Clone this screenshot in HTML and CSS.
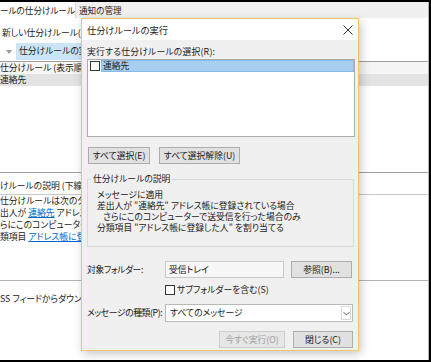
FILE: index.html
```html
<!DOCTYPE html>
<html lang="ja">
<head>
    <meta charset="UTF-8">
    <title>仕分けルールの実行</title>
    <link rel="stylesheet" href="styles.css">
</head>

<body>
    <div class="screen">
        <div class="rules-window">
            <div class="tabs">
                <div class="tab tab-active">ールの仕分けルール</div>
                <div class="tab">通知の管理</div>
            </div>
            <div class="toolbar"><span class="cut">新しい仕分けルール(<u>N</u>)...</span></div>
            <div class="toolbar-run">
                <span class="arrow"></span>
                <span class="run-button">仕分けルールの実行</span>
            </div>
            <div class="rule-list">
                <div class="list-head"><span class="cut">仕分けルール (表示順に適用)</span></div>
                <div class="list-row"><span class="cut">連絡先</span></div>
            </div>
            <div class="desc">
                <div class="desc-label"><span class="cut">けルールの説明 (下線をクリックして編集)</span></div>
                <div class="desc-box">
                    <span class="cut">仕分けルールは次のタイミングで適用</span>
                    <span class="cut">出人が <a class="link">連絡先</a> アドレス帳に登録</span>
                    <span class="cut">らにこのコンピューターで送受信</span>
                    <span class="cut">類項目 <a class="link">アドレス帳に登録した人</a></span>
                </div>
            </div>
            <div class="rss"><span class="cut">SS フィードからダウンロードしたアイテム</span></div>
        </div>

        <div class="dialog">
            <div class="title-bar">
                <span class="title">仕分けルールの実行</span>
                <svg class="close" width="10" height="10" viewBox="0 0 10 10">
                    <path d="M0.5 0.5L9.5 9.5M9.5 0.5L0.5 9.5" stroke="#333" stroke-width="1" fill="none"/>
                </svg>
            </div>
            <div class="dialog-body">
                <div class="field-label">実行する仕分けルールの選択(R):</div>
                <div class="rule-box">
                    <div class="rule-item">
                        <span class="check"></span>
                        <span class="rule-name">連絡先</span>
                    </div>
                </div>
                <div class="select-buttons">
                    <button class="btn btn-all">すべて選択(E)</button>
                    <button class="btn btn-none">すべて選択解除(U)</button>
                </div>
                <fieldset class="desc-group">
                    <legend>仕分けルールの説明</legend>
                    <div class="desc-line">メッセージに適用</div>
                    <div class="desc-line">差出人が "連絡先" アドレス帳に登録されている場合</div>
                    <div class="desc-line indent">さらにこのコンピューターで送受信を行った場合のみ</div>
                    <div class="desc-line">分類項目 "アドレス帳に登録した人" を割り当てる</div>
                </fieldset>
                <div class="form-row folder-row">
                    <span class="row-label">対象フォルダー:</span>
                    <span class="text-box">受信トレイ</span>
                    <button class="btn btn-browse">参照(B)...</button>
                </div>
                <div class="form-row sub-row">
                    <span class="check"></span>
                    <span>サブフォルダーを含む(S)</span>
                </div>
                <div class="form-row type-row">
                    <span class="row-label">メッセージの種類(P):</span>
                    <span class="combo">
                        <span class="combo-text">すべてのメッセージ</span>
                        <span class="combo-arrow">
                            <svg width="7" height="5" viewBox="0 0 7 5">
                                <path d="M0.5 1L3.5 4L6.5 1" stroke="#666" stroke-width="1" fill="none"/>
                            </svg>
                        </span>
                    </span>
                </div>
                <div class="dialog-buttons">
                    <button class="btn btn-run" disabled>今すぐ実行(O)</button>
                    <button class="btn btn-close">閉じる(C)</button>
                </div>
            </div>
        </div>
    </div>
</body>
</html>
```

FILE: styles.css
```css
* {
    box-sizing: border-box;
}

body {
    margin: 0;
    font-family: "Noto Sans CJK JP", "Noto Sans", sans-serif;
    font-size: 8.8px;
    font-feature-settings: "palt";
    color: #1a1a1a;
    background: #000;
}

.screen {
    position: relative;
    width: 431px;
    height: 362px;
    overflow: hidden;
    border-top: 2px solid #000;
    border-right: 2px solid #000;
    border-bottom: 2px solid #000;
    background: #fff;
}

/* background rules window */
.rules-window {
    height: 100%;
    border-right: 1px solid #b4b4b4;
    white-space: nowrap;
    overflow: hidden;
    line-height: 12px;
}

.cut {
    display: block;
    width: 81px;
    overflow: hidden;
    white-space: nowrap;
}

.tabs {
    display: flex;
    height: 16px;
    background: #f0f0f0;
    font-size: 8.6px;
}

.tab {
    padding: 2px 5px 0 3px;
}

.tab-active {
    width: 76px;
    padding-left: 0;
    background: #fff;
    border-right: 1px solid #dadada;
}

.toolbar {
    margin-top: 9px;
    padding-left: 2px;
}

.toolbar .cut {
    width: 79px;
}

.toolbar-run {
    display: flex;
    align-items: center;
    width: 81px;
    height: 17px;
    margin-top: 4px;
    overflow: hidden;
}

.arrow {
    flex: none;
    width: 0;
    height: 0;
    margin: 1px 4px 0 6px;
    border-left: 3px solid transparent;
    border-right: 3px solid transparent;
    border-top: 4px solid #9a9a9a;
}

.run-button {
    flex: none;
    height: 17px;
    padding: 2px 4px 0 3px;
    background: #cce4f7;
}

.rule-list {
    margin-top: 1px;
    border-top: 1px solid #a0a0a0;
}

.list-head {
    background: #f5f5f5;
}

.list-row {
    background: #e3e3e3;
}

.desc {
    margin-top: 86px;
    border-top: 1px solid #a0a0a0;
}

.desc-label {
    height: 22px;
    padding-top: 7px;
    border-bottom: 1px solid #c8c8c8;
}

.desc-box {
    height: 86px;
    border-bottom: 1px solid #b4b4b4;
}

.link {
    color: #0066cc;
    text-decoration: underline;
}

.rss {
    margin-top: 12px;
}

/* dialog */
.dialog {
    position: absolute;
    left: 81px;
    top: 16px;
    width: 278px;
    height: 333px;
    border: 1px solid #f0c566;
    background: #f0f0f0;
    box-shadow: 2px 3px 9px rgba(0, 0, 0, 0.22);
    line-height: 12px;
}

.title-bar {
    display: flex;
    align-items: center;
    justify-content: space-between;
    height: 21px;
    padding: 0 5px;
    background: #fff;
}

.title {
    font-size: 9.2px;
}

.dialog-body {
    display: flex;
    flex-direction: column;
    padding: 6px 3px 0 5px;
}

.field-label {
    letter-spacing: 0.2px;
}

.rule-box {
    height: 78px;
    margin-top: 1px;
    background: #fff;
    border: 1px solid #acacac;
}

.rule-item {
    display: flex;
    align-items: center;
}

.check {
    display: inline-block;
    flex: none;
    width: 10px;
    height: 10px;
    background: #fff;
    border: 1px solid #333;
}

.rule-item .check {
    margin-left: 2px;
}

.rule-name {
    flex: 1;
    height: 12px;
    margin-left: 1px;
    padding-left: 1px;
    background: #a6cff2;
    border: 1px solid #86bbe8;
    line-height: 10px;
}

.btn {
    height: 17px;
    padding: 0;
    font-family: inherit;
    font-size: inherit;
    font-feature-settings: inherit;
    color: #1a1a1a;
    background: #e1e1e1;
    border: 1px solid #adadad;
    border-radius: 0;
}

.select-buttons {
    display: flex;
    gap: 9px;
    margin-top: 10px;
    padding-left: 1px;
}

.btn-all {
    width: 62px;
}

.btn-none {
    width: 81px;
}

.desc-group {
    margin: 9px 1px 0 0;
    padding: 4px 0 13px 3px;
    border: 1px solid #d9d9d9;
}

.desc-group legend {
    padding: 0 2px;
}

.desc-line {
    padding-left: 6px;
    line-height: 11px;
}

.desc-line.indent {
    padding-left: 12px;
}

.form-row {
    display: flex;
    align-items: center;
    white-space: nowrap;
}

.row-label {
    flex: none;
    width: 78px;
    letter-spacing: -0.4px;
}

.folder-row {
    margin-top: 14px;
}

.text-box {
    width: 119px;
    height: 17px;
    padding: 2px 3px 0;
    background: #f7f7f7;
    border: 1px solid #cacaca;
}

.btn-browse {
    width: 61px;
    margin-left: 7px;
}

.sub-row {
    margin-top: 6px;
    padding-left: 78px;
    gap: 2px;
}

.type-row {
    margin-top: 8px;
}

.combo {
    display: flex;
    align-items: center;
    justify-content: space-between;
    width: 188px;
    height: 18px;
    padding: 0 1px 0 4px;
    background: #fff;
    border: 1px solid #b9b9b9;
}

.combo-arrow {
    display: flex;
    align-items: center;
    justify-content: center;
    width: 10px;
    height: 14px;
    border: 1px solid #d9d9d9;
}

.dialog-buttons {
    display: flex;
    justify-content: flex-end;
    gap: 8px;
    margin-top: 9px;
    padding-right: 2px;
}

.btn-run {
    width: 66px;
    color: #a0a0a0;
    background: #e6e6e6;
    border-color: #cdcdcd;
}

.btn-close {
    width: 60px;
}
```
